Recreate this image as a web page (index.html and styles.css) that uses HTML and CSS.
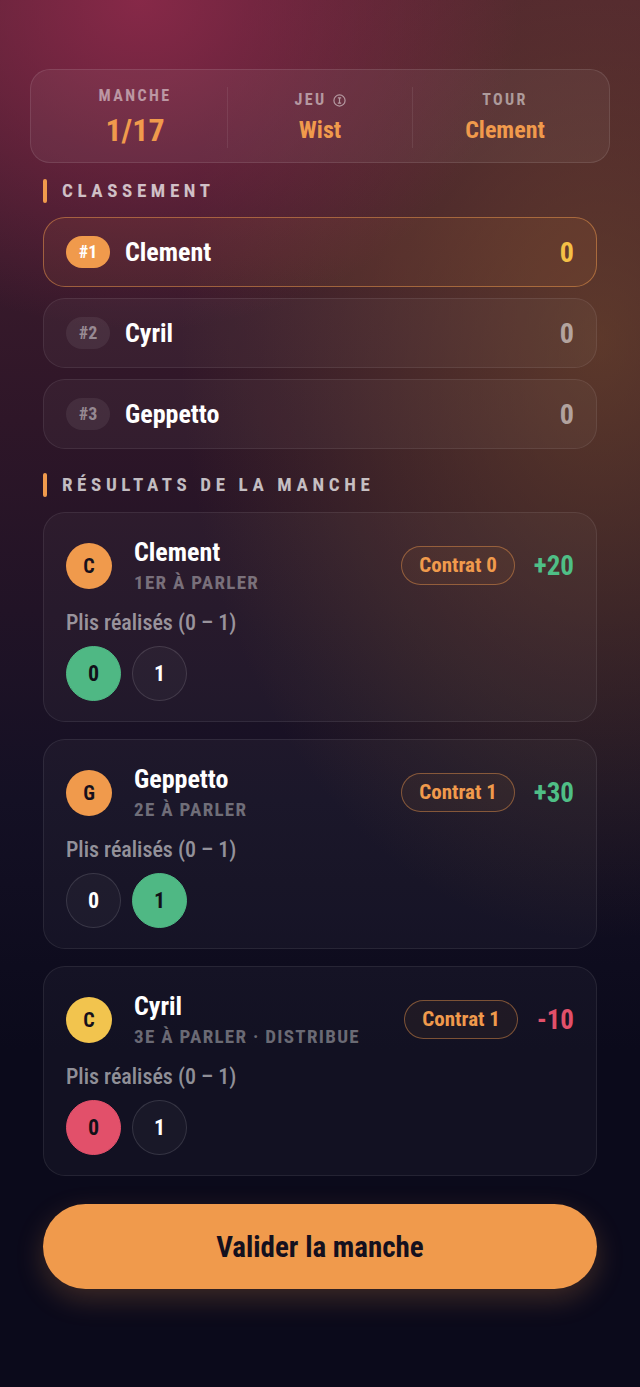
FILE: index.html
```html
<!DOCTYPE html>
<html lang="fr">
  <head>
    <meta charset="UTF-8" />
    <meta name="viewport" content="width=device-width, initial-scale=1.0" />
    <title>Manche 1/17 - Wist</title>
    <link rel="stylesheet" href="styles.css">
  </head>
  <body>
    <main class="page">
      <!-- Infos de la manche -->
      <section class="stats">
        <div class="stat stat-main">
          <div class="stat-label">Manche</div>
          <div class="stat-value">1/17</div>
        </div>
        <div class="stat">
          <div class="stat-label">
            Jeu
            <svg class="info" viewBox="0 0 14 14" width="13" height="13">
              <circle cx="7" cy="7" r="6" fill="none" stroke="currentColor" stroke-width="1.3" />
              <path d="M5.2 4.2h3.6M5.2 9.8h3.6M7 4.2v5.6" fill="none" stroke="currentColor" stroke-width="1.3" />
            </svg>
          </div>
          <div class="stat-value">Wist</div>
        </div>
        <div class="stat">
          <div class="stat-label">Tour</div>
          <div class="stat-value">Clement</div>
        </div>
      </section>

      <h2 class="section-title">Classement</h2>
      <div class="ranking">
        <div class="rank-row leader">
          <span class="rank-badge">#1</span>
          <span class="rank-name">Clement</span>
          <span class="rank-score">0</span>
        </div>
        <div class="rank-row">
          <span class="rank-badge">#2</span>
          <span class="rank-name">Cyril</span>
          <span class="rank-score">0</span>
        </div>
        <div class="rank-row">
          <span class="rank-badge">#3</span>
          <span class="rank-name">Geppetto</span>
          <span class="rank-score">0</span>
        </div>
      </div>

      <h2 class="section-title">Résultats de la manche</h2>
      <div class="results">
        <div class="player-card">
          <div class="player-head">
            <span class="avatar orange">C</span>
            <div class="player-info">
              <div class="player-name">Clement</div>
              <div class="player-sub">1er à parler</div>
            </div>
            <span class="contract">Contrat 0</span>
            <span class="points plus">+20</span>
          </div>
          <div class="tricks-label">Plis réalisés (0 – 1)</div>
          <div class="tricks">
            <span class="trick win">0</span>
            <span class="trick">1</span>
          </div>
        </div>

        <div class="player-card">
          <div class="player-head">
            <span class="avatar orange">G</span>
            <div class="player-info">
              <div class="player-name">Geppetto</div>
              <div class="player-sub">2e à parler</div>
            </div>
            <span class="contract">Contrat 1</span>
            <span class="points plus">+30</span>
          </div>
          <div class="tricks-label">Plis réalisés (0 – 1)</div>
          <div class="tricks">
            <span class="trick">0</span>
            <span class="trick win">1</span>
          </div>
        </div>

        <div class="player-card">
          <div class="player-head">
            <span class="avatar yellow">C</span>
            <div class="player-info">
              <div class="player-name">Cyril</div>
              <div class="player-sub">3e à parler · distribue</div>
            </div>
            <span class="contract">Contrat 1</span>
            <span class="points minus">-10</span>
          </div>
          <div class="tricks-label">Plis réalisés (0 – 1)</div>
          <div class="tricks">
            <span class="trick lose">0</span>
            <span class="trick">1</span>
          </div>
        </div>
      </div>

      <button class="validate">Valider la manche</button>
    </main>
  </body>
</html>
```

FILE: styles.css
```css
html {
  background-color: #0b0a1b;
}

body {
  margin: 0;
  min-height: 1387px;
  font-family: Roboto, "Liberation Sans", sans-serif;
  font-stretch: 87.5%;
  color: #fff;
  background:
    radial-gradient(ellipse 380px 330px at 140px 0px, rgba(145, 42, 76, 0.85), rgba(145, 42, 76, 0) 100%),
    radial-gradient(ellipse 420px 600px at 600px 340px, rgba(120, 78, 44, 0.6), rgba(120, 78, 44, 0) 100%),
    linear-gradient(180deg, #4a2030 0px, #2e1628 420px, #141024 800px, #0b0a1b 1050px);
}

.page {
  padding: 69px 43px 60px;
}

/* Bandeau du haut */
.stats {
  display: flex;
  margin: 0 -13px;
  padding: 17px 12px 14px;
  border: 1px solid rgba(255, 255, 255, 0.1);
  border-radius: 20px;
  background-color: rgba(255, 255, 255, 0.05);
}

.stat {
  flex: 1;
  display: flex;
  flex-direction: column;
  align-items: center;
  justify-content: center;
  gap: 7px;
  border-left: 1px solid rgba(255, 255, 255, 0.08);
}

.stat:first-child {
  border-left: none;
}

.stat-label {
  display: flex;
  align-items: center;
  gap: 6px;
  font-size: 16px;
  line-height: 18px;
  font-weight: 700;
  letter-spacing: 2.4px;
  text-transform: uppercase;
  color: rgba(255, 255, 255, 0.5);
}

.info {
  color: rgba(255, 255, 255, 0.5);
}

.stat-value {
  font-size: 24px;
  line-height: 28px;
  font-weight: 700;
  color: #f09a4c;
}

.stat-main .stat-value {
  font-size: 32px;
  line-height: 36px;
}

/* Titres de section */
.section-title {
  display: flex;
  align-items: center;
  gap: 15px;
  margin: 16px 0 14px;
  font-size: 19px;
  line-height: 24px;
  font-weight: 700;
  letter-spacing: 4.6px;
  text-transform: uppercase;
  color: rgba(255, 255, 255, 0.72);
}

.section-title::before {
  content: "";
  width: 4px;
  height: 24px;
  border-radius: 2px;
  background-color: #f09a4c;
}

.ranking + .section-title {
  margin: 24px 0 15px;
}

/* Classement */
.ranking {
  display: flex;
  flex-direction: column;
  gap: 11px;
}

.rank-row {
  display: flex;
  align-items: center;
  height: 68px;
  padding: 0 22px;
  border: 1px solid rgba(255, 255, 255, 0.08);
  border-radius: 22px;
  background-color: rgba(255, 255, 255, 0.035);
}

.rank-row.leader {
  border-color: rgba(240, 154, 76, 0.5);
  background-color: rgba(240, 154, 76, 0.08);
}

.rank-badge {
  width: 44px;
  height: 32px;
  line-height: 32px;
  border-radius: 16px;
  text-align: center;
  font-size: 18px;
  font-weight: 700;
  color: rgba(255, 255, 255, 0.45);
  background-color: rgba(255, 255, 255, 0.07);
}

.leader .rank-badge {
  color: #fff;
  background-color: #f09a4c;
}

.rank-name {
  flex: 1;
  margin-left: 15px;
  font-size: 26px;
  font-weight: 700;
}

.rank-score {
  font-size: 28px;
  font-weight: 700;
  color: rgba(255, 255, 255, 0.55);
}

.leader .rank-score {
  color: #f4c046;
}

/* Résultats */
.results {
  display: flex;
  flex-direction: column;
  gap: 17px;
}

.player-card {
  padding: 24px 22px 20px;
  border: 1px solid rgba(255, 255, 255, 0.08);
  border-radius: 22px;
  background-color: rgba(255, 255, 255, 0.03);
}

.player-head {
  display: flex;
  align-items: center;
}

.avatar {
  width: 46px;
  height: 46px;
  line-height: 46px;
  border-radius: 50%;
  text-align: center;
  font-size: 20px;
  font-weight: 700;
  color: #16101c;
}

.avatar.orange {
  background-color: #f09a4c;
}

.avatar.yellow {
  background-color: #f2c44e;
}

.player-info {
  flex: 1;
  margin-left: 22px;
}

.player-name {
  font-size: 26px;
  line-height: 30px;
  font-weight: 700;
}

.player-sub {
  margin-top: 5px;
  font-size: 19px;
  line-height: 22px;
  font-weight: 700;
  letter-spacing: 1.3px;
  text-transform: uppercase;
  color: rgba(255, 255, 255, 0.38);
}

.contract {
  padding: 0 17px;
  height: 37px;
  line-height: 37px;
  border: 1px solid rgba(240, 154, 76, 0.45);
  border-radius: 20px;
  font-size: 21px;
  font-weight: 700;
  color: #f09a4c;
  background-color: rgba(240, 154, 76, 0.06);
}

.points {
  margin-left: 19px;
  font-size: 27px;
  font-weight: 700;
}

.points.plus {
  color: #4fbf86;
}

.points.minus {
  color: #e2506a;
}

.tricks-label {
  margin-top: 16px;
  font-size: 22px;
  line-height: 26px;
  font-weight: 500;
  color: rgba(255, 255, 255, 0.55);
}

.tricks {
  display: flex;
  gap: 11px;
  margin-top: 10px;
}

.trick {
  width: 53px;
  height: 53px;
  line-height: 53px;
  border: 1px solid rgba(255, 255, 255, 0.12);
  border-radius: 50%;
  text-align: center;
  font-size: 22px;
  font-weight: 700;
  background-color: rgba(255, 255, 255, 0.03);
}

.trick.win {
  border-color: #4fb884;
  background-color: #4fb884;
  color: #111018;
}

.trick.lose {
  border-color: #e2506a;
  background-color: #e2506a;
  color: #111018;
}

/* Bouton */
.validate {
  display: block;
  width: 100%;
  height: 85px;
  margin-top: 28px;
  border: none;
  border-radius: 43px;
  font-family: inherit;
  font-stretch: inherit;
  font-size: 29px;
  font-weight: 700;
  color: #14101e;
  background-color: #f09a4c;
  box-shadow: 0 10px 28px rgba(240, 154, 76, 0.22);
  cursor: pointer;
}
```
